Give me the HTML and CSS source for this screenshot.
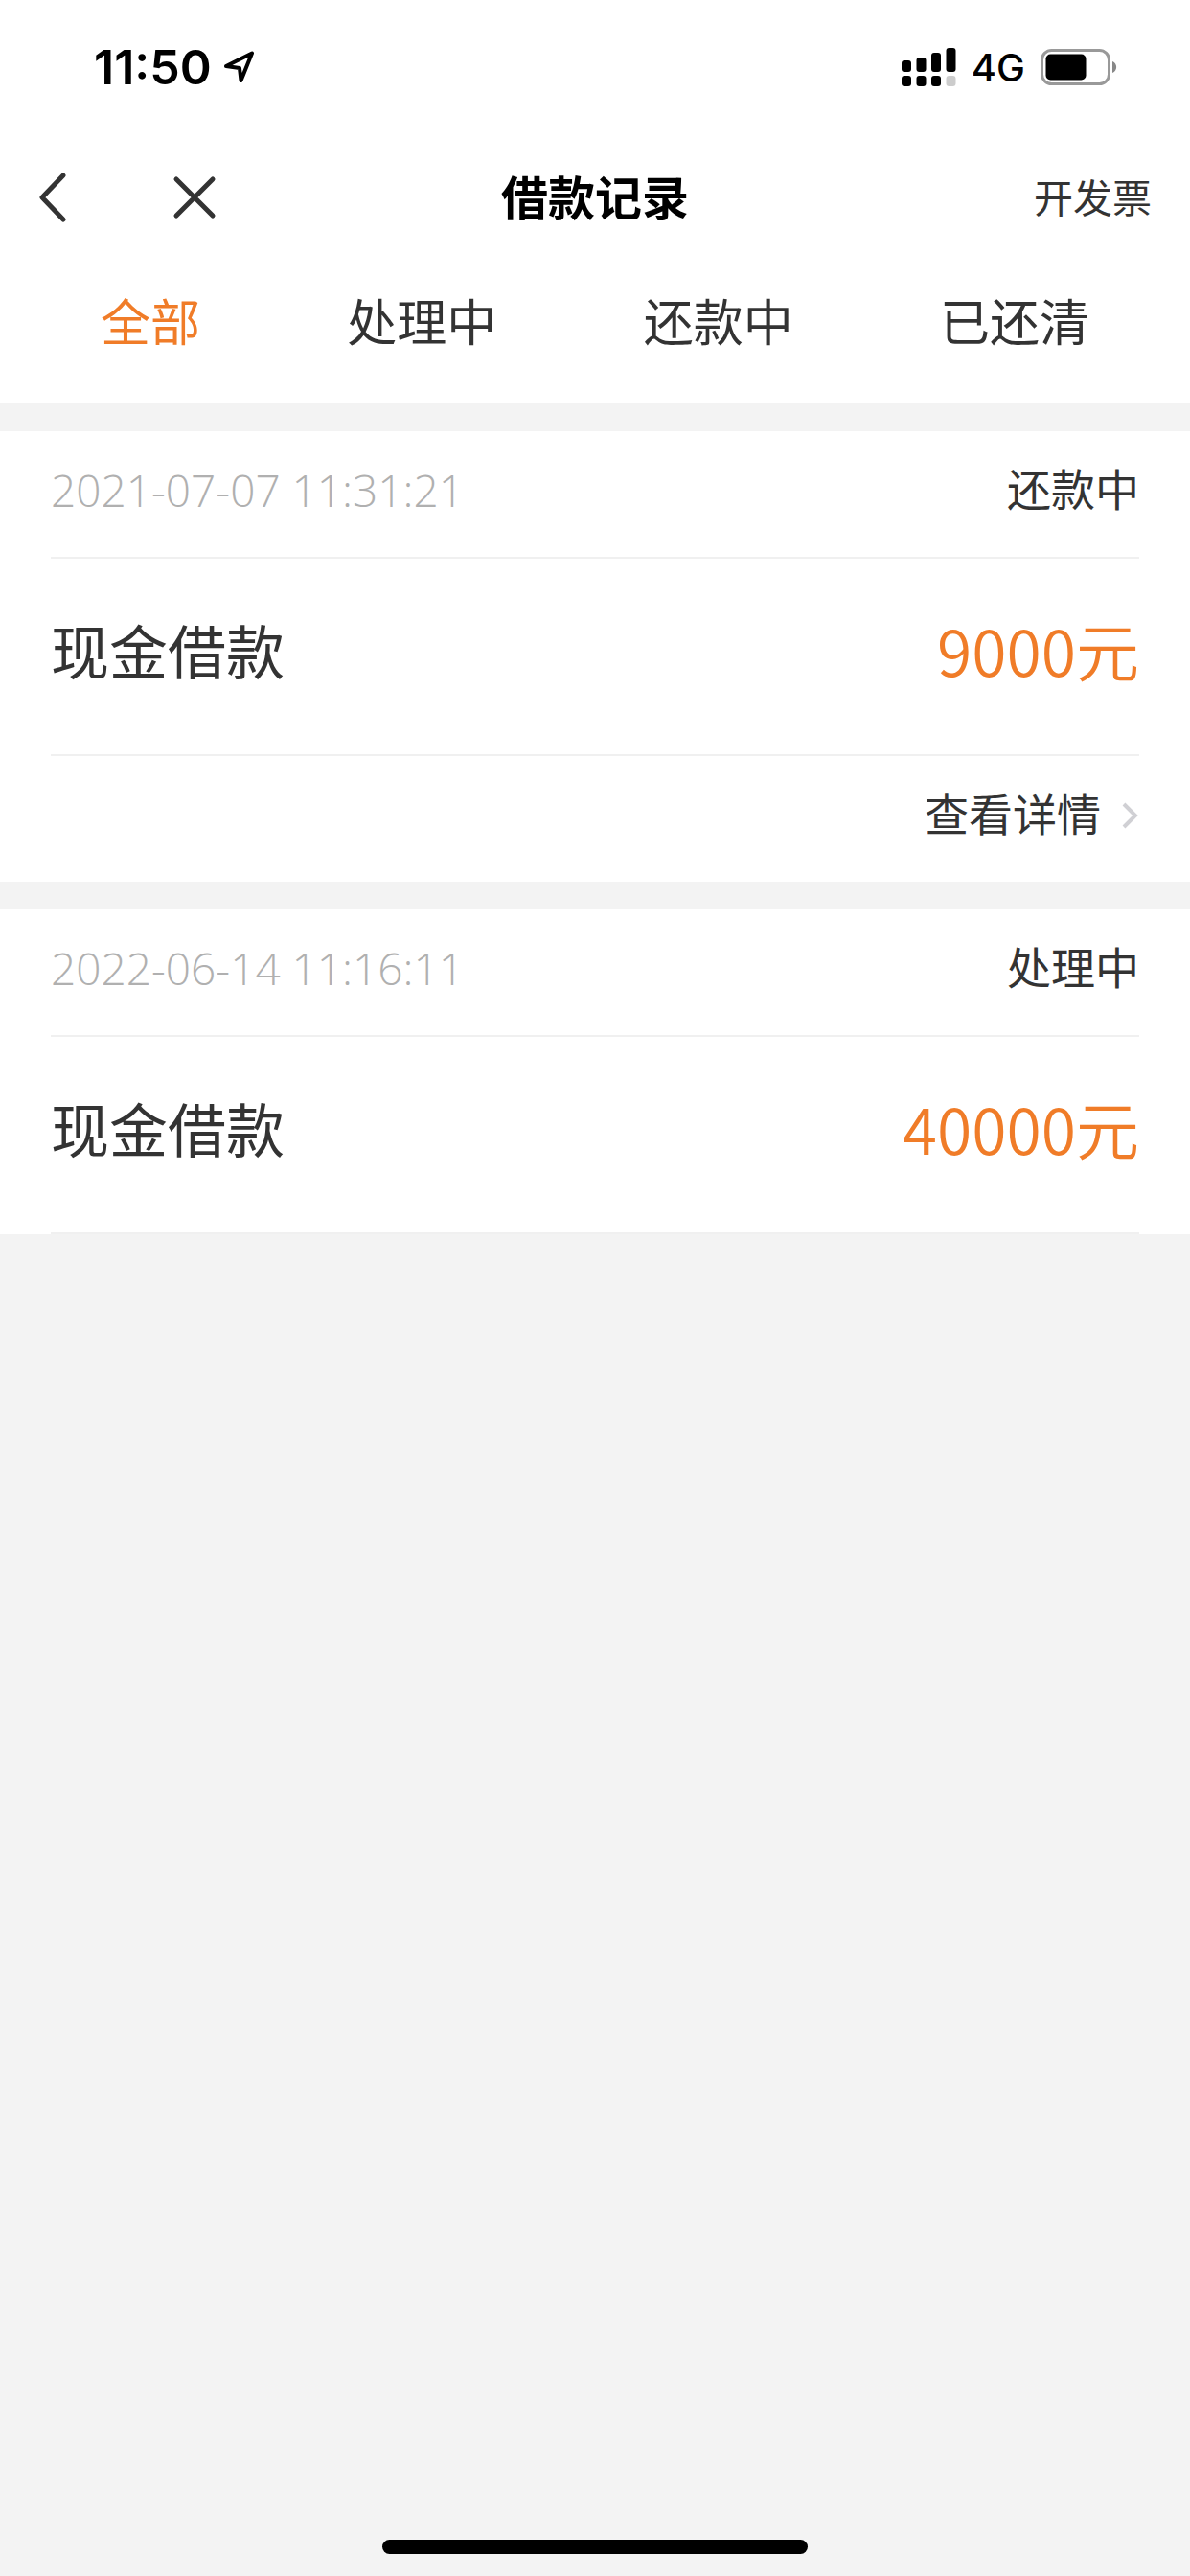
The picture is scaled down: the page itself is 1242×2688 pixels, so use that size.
FILE: index.html
```html
<!DOCTYPE html>
<html lang="zh-CN">
<head>
    <meta charset="UTF-8">
    <meta name="viewport" content="width=device-width, initial-scale=1.0">
    <title>借款记录</title>
    <link rel="stylesheet" href="styles.css">
</head>
<body>
    <div class="status-bar">
        <div class="status-left">
            <span class="time">11:50</span>
            <svg class="location" width="34" height="36" viewBox="0 0 34 36">
                <path d="M3 17 L30 3.500 L18.500 32 L17 19 Z" fill="none" stroke="#000" stroke-width="4" stroke-linejoin="round"/>
            </svg>
        </div>
        <div class="status-right">
            <svg width="57" height="40" viewBox="0 0 57 40">
                <rect x="0" y="13" width="10" height="12" rx="3"/>
                <rect x="15.500" y="10" width="10" height="15" rx="3"/>
                <rect x="31" y="5" width="10" height="20" rx="3"/>
                <rect x="46.500" y="0" width="10" height="25" rx="3"/>
                <rect x="0" y="29" width="10" height="11" rx="3"/>
                <rect x="15.500" y="29" width="10" height="11" rx="3"/>
                <rect x="31" y="29" width="10" height="11" rx="3"/>
                <rect x="46.500" y="29" width="10" height="11" rx="3" fill="#ccc"/>
            </svg>
            <span class="network">4G</span>
            <svg width="80" height="38" viewBox="0 0 80 38">
                <rect x="1.500" y="1.500" width="70" height="35" rx="10" fill="none" stroke="#999" stroke-width="3"/>
                <rect x="5.500" y="5.500" width="42" height="27" rx="5"/>
                <path d="M75 13 C80.500 15 80.500 23 75 25 Z" fill="#888"/>
            </svg>
        </div>
    </div>

    <header class="nav">
        <div class="nav-left">
            <button type="button" aria-label="返回">
                <svg width="30" height="52" viewBox="0 0 30 52">
                    <path d="M26 3 L4 26 L26 49" fill="none" stroke="#333" stroke-width="5" stroke-linecap="round" stroke-linejoin="round"/>
                </svg>
            </button>
            <button type="button" aria-label="关闭">
                <svg width="46" height="46" viewBox="0 0 46 46">
                    <path d="M4 4 L42 42 M42 4 L4 42" fill="none" stroke="#333" stroke-width="5" stroke-linecap="round"/>
                </svg>
            </button>
        </div>
        <h1>借款记录</h1>
        <a class="invoice" href="#">开发票</a>
    </header>

    <nav class="tabs">
        <button type="button" class="active">全部</button>
        <button type="button">处理中</button>
        <button type="button">还款中</button>
        <button type="button">已还清</button>
    </nav>

    <main class="records">
        <section class="record">
            <div class="row record-head">
                <span class="date">2021-07-07 11:31:21</span>
                <span class="status">还款中</span>
            </div>
            <div class="row record-body">
                <span class="name">现金借款</span>
                <span class="amount">9000元</span>
            </div>
            <a class="row record-foot" href="#">
                查看详情
                <svg width="18" height="28" viewBox="0 0 18 28">
                    <path d="M2 2 L14 14 L2 26" fill="none" stroke="#d0d0d4" stroke-width="4"/>
                </svg>
            </a>
        </section>

        <section class="record">
            <div class="row record-head">
                <span class="date">2022-06-14 11:16:11</span>
                <span class="status">处理中</span>
            </div>
            <div class="row record-body">
                <span class="name">现金借款</span>
                <span class="amount">40000元</span>
            </div>
        </section>
    </main>

    <div class="home-indicator"></div>
</body>
</html>
```
FILE: styles.css
```css
* {
    box-sizing: border-box;
}
body {
    display: flex;
    flex-direction: column;
    min-height: 100vh;
    margin: 0;
    background-color: #f3f3f3;
    color: #333;
    font-family: "Noto Sans CJK SC", sans-serif;
    font-size: 46px;
}
button {
    padding: 0;
    border: none;
    background: none;
    color: inherit;
    font: inherit;
    cursor: pointer;
}
a {
    color: inherit;
    text-decoration: none;
}
svg {
    display: block;
    flex: none;
}

/* status bar */
.status-bar {
    display: flex;
    justify-content: space-between;
    align-items: center;
    height: 140px;
    padding: 0 76px 0 98px;
    background-color: #fff;
    color: #000;
    font-family: Inter, sans-serif;
}
.status-left,
.status-right {
    display: flex;
    align-items: center;
}
.status-left {
    gap: 12px;
}
.status-right {
    gap: 16px;
}
.time {
    font-size: 50px;
    font-weight: 600;
}
.network {
    font-size: 40px;
    font-weight: 500;
}

/* title bar */
.nav {
    display: grid;
    grid-template-columns: 1fr auto 1fr;
    align-items: center;
    height: 132px;
    padding: 0 40px;
    background-color: #fff;
}
.nav-left {
    display: flex;
    align-items: center;
    gap: 110px;
}
.nav h1 {
    margin: 0;
    padding-bottom: 6px;
    color: #000;
    font-size: 49px;
    font-weight: bold;
}
.invoice {
    justify-self: end;
    padding-bottom: 4px;
    font-size: 41px;
}

/* filter tabs */
.tabs {
    display: flex;
    justify-content: space-between;
    padding: 22px 105px 47px;
    background-color: #fff;
    font-size: 52px;
    line-height: 80px;
}
.tabs .active {
    color: #f07c28;
}

/* record list */
.records {
    display: grid;
    gap: 29px;
    margin-top: 29px;
}
.record {
    padding: 0 53px;
    background-color: #fff;
}
.row {
    display: flex;
    justify-content: space-between;
    align-items: center;
    padding-bottom: 16px;
}
.record-head {
    height: 133px;
    border-bottom: 2px solid #f0f0f0;
}
.date {
    margin-top: 6px;
    color: #b0b0b0;
    font-family: "Open Sans", sans-serif;
    font-weight: 300;
}
.record-body {
    height: 206px;
    border-bottom: 2px solid #f0f0f0;
}
.name {
    font-size: 61px;
}
.amount {
    color: #f07c28;
    font-size: 66px;
    font-weight: 350;
}
.record-foot {
    justify-content: flex-end;
    gap: 22px;
    height: 131px;
}
.record-foot svg {
    margin-top: 8px;
}

.home-indicator {
    width: 444px;
    height: 15px;
    margin: auto auto 23px;
    border-radius: 8px;
    background-color: #000;
}
```
